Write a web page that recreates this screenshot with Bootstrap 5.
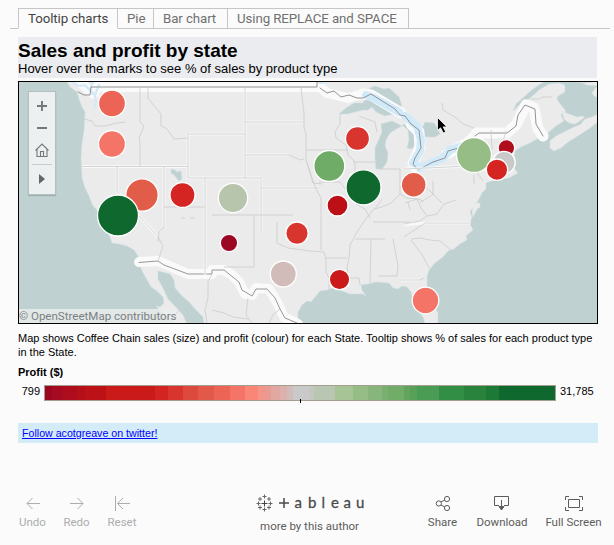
<!DOCTYPE html>
<html lang="en">
<head>
<meta charset="utf-8">
<meta name="viewport" content="width=device-width, initial-scale=1">
<title>Tooltip charts</title>
<link href="https://cdn.jsdelivr.net/npm/bootstrap@5.3.0/dist/css/bootstrap.min.css" rel="stylesheet">
<style>
body{background:#fbfbfb;color:#000;font-family:"Liberation Sans",Arial,sans-serif;width:614px;height:545px;overflow:hidden}
.ui-font{font-family:Roboto,"Open Sans",sans-serif;font-weight:400}
.viz-tabs{padding:8px 4px 0 10px;height:29px}
.viz-tabs .spacer{width:8px;border-bottom:1px solid #c6c6c6}
.viz-tabs .nav-link{border:1px solid #c6c6c6;border-left:0;border-radius:0;padding:0 0 0 9px;height:21px;line-height:19px;font-size:13.3px;letter-spacing:-.1px;color:#707070;white-space:nowrap}
.viz-tabs .nav-link:hover{border-color:#c6c6c6}
.viz-tabs .nav-link.active{border-left:1px solid #c6c6c6;border-bottom-color:#fbfbfb;background:#fbfbfb;color:#444}
.w-a{width:100px}.w-b{width:36px}.w-c{width:74px}.w-d{width:181px}
.w-a,.w-b,.w-c,.w-d{margin:0}
.heading{margin:8px 17px 0 18px;background:#ebecef;height:41px}
.heading h1{font-size:19px;line-height:21px;padding-top:3px;font-weight:700;margin:0}
.heading p{font-size:13px;line-height:15px;margin:0}
.map-box{margin:3px 16px 0 18px;height:243px;border:1px solid #000}
.map-tools{left:9px;top:9px;width:28px;height:104px;background:#edf0f1;border:1px solid #b4bfbf;box-shadow:0 1px 1px #9fb0b0}
.credit{left:0;bottom:0;width:157px;height:14px;line-height:14px;background:rgba(236,238,238,.78);color:#7a8080;font-size:11.55px;white-space:nowrap}
.caption-text{margin:7px 16px 0 18px;font-size:11px;line-height:14px;height:28px;white-space:nowrap}
.legend-title{margin:7px 18px 0;font-size:11px;font-weight:700;line-height:13px}
.legend-row{margin-top:6px;height:17px;font-size:11px;line-height:12px}
.legend-row .low{width:44px;padding-right:4px}
.ramp{width:512px;height:16px;border:1px solid #a39e8f}
.ramp i{left:255px;top:13px;width:1px;height:4px;background:#000}
.follow{margin:21px 16px 0 18px;height:20px;padding-left:4px;background:#d4ebf8;font-size:10.65px;line-height:20px}
.follow a{color:#00f}
.foot{margin-top:50px;height:51px;font-size:11.5px;line-height:15px}
.foot .tool{padding-top:1px}
.foot svg{display:block;margin:0 auto 3px}
.off{color:#adadad}.on{color:#5c5c5c}
.lft{padding-left:18px;width:230px}
.undo{width:29px;margin-right:15px}.redo{width:29px;margin-right:16px}.reset{width:30px}
.mid{width:159px}
.brand{height:26px;padding-left:25px;padding-top:1px}
.rgt{width:225px;padding-left:38px;white-space:nowrap}
.share{width:31px;margin-right:18px}.down{width:52px;margin-right:17px}.full{width:57px}
</style>
<script src="https://cdn.jsdelivr.net/npm/bootstrap@5.3.0/dist/js/bootstrap.bundle.min.js"></script>
</head>
<body>
<nav class="viz-tabs ui-font d-flex">
<span class="spacer"></span>
<a class="nav-link active w-a">Tooltip charts</a><a class="nav-link w-b">Pie</a><a class="nav-link w-c">Bar chart</a><a class="nav-link w-d">Using REPLACE and SPACE</a>
<span class="spacer flex-grow-1"></span>
</nav>
<header class="heading"><h1>Sales and profit by state</h1><p>Hover over the marks to see % of sales by product type</p></header>
<section class="map-box position-relative overflow-hidden">
<svg class="d-block" width="578" height="241" viewBox="19 82 578 241">
<rect x="18" y="81" width="580" height="243" fill="#ebebeb"/>
<g fill="#c0d1d1" stroke="#cddfe4" stroke-width=".5">
<path d="M18 80H66L70 87 77 92 79 99 82 107 85 112 84 130 82 143 81 158 82 178 85 188 89 196 93 206 99 212 104 225 109 234 112 243 119 244 127 246 134 250 138 256 139 263 142 271 146 278 151 287 157 291 163 297 164 303 160 307 156 306 160 311 169 318 176 324H18Z"/>
<path d="M158 271 162 272 170 274 174 280 175 288 181 295 189 302 196 310 203 317 204 324H187L183 315 175 306 168 299 163 288 158 279Z"/>
<path d="M298 324 298 312 302 305 307 301 311 302 316 296 320 291 327 290 333 288 342 291 350 294 356 294 363 294 366 296 362 290 361 285 368 284 376 282 389 283 393 288 398 289 402 286 407 287 411 292 414 301 417 310 423 317 425 324H438L438 313 432 302 428 294 427 285 427 277 429 270 435 263 443 257 448 251 454 249 460 244 467 240 466 236 473 230 470 224 472 217 470 211 475 207 479 199 482 193 486 189 486 183 492 181 500 179 509 178 518 173 514 168 514 160 515 151 521 147 530 143 537 139 543 136 548 133 556 126 564 121 561 115 566 111 561 105 557 99 558 96 565 92 565 85 559 83 549 84 539 90 529 99 522 102 513 111 516 104 524 97 533 89 545 81H598V324Z"/>
<path d="M171 169 175 170 177 172 181 171 182 179 179 181 174 175 171 173Z"/>
<path d="M339 114 346 108 354 103 363 103 366 98 370 88 375 86 384 89 389 88 399 97 402 106 398 107 398 113 385 116 376 112 372 107 368 110 363 110 355 112 347 114Z"/>
<path d="M381 124 392 121 402 126 396 129 390 133 386 140 385 146 388 153 387 162 382 169 376 169 375 158 375 148 379 139 382 132Z"/>
<path d="M402 125 411 123 420 132 425 122 434 123 438 129 440 134 435 137 428 137 420 136 412 149 407 148 409 140 408 130Z"/>
</g>
<g fill="#ebebeb" stroke="#dae2e2" stroke-width=".5">
<path d="M550 141 556 136 564 132 574 127 580 125 585 119 592 117 599 113V121L590 128 581 134 573 139 568 142 561 148 554 151 550 148Z"/>
<path d="M562 111 569 114 577 117 583 116 584 118 575 124 569 123 564 119ZM578 81 584 83 593 82 599 81V86L587 85ZM596 87 599 89V98L594 96 592 93ZM475 203 480 203 480 207 477 209 473 217 472 211Z"/>
</g>
<g fill="none" stroke-linejoin="round" stroke-linecap="round">
<path d="M80 82 91 92 94 94 97 87 320 87 327 93 348 98 363 94" stroke="#fafafa" stroke-width="10"/>
<path d="M139 262 158 261 188 274 212 274 212 270 224 270 232 275 239 282 245 294 252 295 256 288 269 289 278 304 284 317 298 324" stroke="#fafafa" stroke-width="10"/>
<path d="M363 94 371 95 401 113M411 124 419 132 420 148 413 163 416 168M447 154 469 142 477 133 507 133 516 125 526 105 534 108 538 129 543 136" stroke="#fafafa" stroke-width="11"/>
<path d="M366 95 374 98 399 112M405 116 417 126 421 140 420 151 413 163 420 168 443 158 450 150 462 146" stroke="#d1eafa" stroke-width="8"/>
<path d="M71 81 79 86 85 85 93 94M93 81 90 90 95 95 99 85M95 96 96 104 94 107M319 83H324" stroke="#d2eaf7" stroke-width="2.2"/>
<path d="M78 92 84 95 90 95 91 87 317 87V82M320 88 327 93 334 91 341 97 349 95 357 98 363 98 371 94 395 109 400 115 405 116 411 124 419 130 421 148 415 158 413 164 418 170 433 162 445 158 448 151 462 147M475 136 479 133 507 133 516 126 518 115 525 105 530 107 535 109 536 124 543 136" stroke="#929292" stroke-width="1"/>
<path d="M139 262.500 158 261 164 265 188 274H212V270H224L239 282 242 290 252 296 256 289 267 289 275 298 280 309 285 318 297 323" stroke="#989898" stroke-width="1"/>
</g>
<g fill="none" stroke="#fff" stroke-width="3" opacity=".65"><path d="M82 166.500H188M188 134V178H261M261 178V232M245 88V178M117 167V191L158 237M164 167V227M205 178V275M245 122H304M245 155H289M188 134H245M261 188H320M404 225 425 223H471M404 169 448 167 483 165M401 280H420"/></g>
<g fill="none" stroke="#cecece" stroke-width=".85">
<path d="M84 119 92 121 95 126 105 126 117 123 126 122M140 87V122L144 126 139 138 140 143V166M82 166.500H188M188 134H245M188 134V178H205M148 87V98L155 107 161 114 161 126 167 129 174 139 188 138M245 88V178M205 178H261V232M117 167V191L158 237 163 246 158 261M164 167V227L159 232 158 242M205 178V275M205 207H164M212 215H254V267H224M254 215H293M277 222V243L288 248 310 251 324 252 326 260V272L329 278 329 289M245 122H304M245 155H289L300 160 304 159M301 88 304 113 304 128 306 134 306 150 306 160 311 175 316 189 321 198 321 250M306 150H348M261 188H320M319 182H340L347 191M306 160 308 166 313 183 322 184M340 113V124L335 132 336 138 346 145 348 155 355 162 355 171 349 178 347 188M353 162H375M359 116 375 122 377 132M379 169H400V194L391 203 382 207 374 209 365 220 357 232 350 245 349 258 347 267 348 278 359 278 360 285M325 258H347M355 239H385M371 239 370 283M393 239 398 266 397 276H378M373 222H410M400 194 407 198 418 199 423 201M405 203 417 199 421 208 427 216 420 221 404 224M427 216 437 214 444 204 456 200M404 237 425 223H471M411 239 420 238 430 240 440 241 451 250M411 240 423 256 429 268M401 280H420L424 278M404 169 448 167 483 165M433 181 433 194 420 203M478 165V174L483 181M491 130 492 150M506 131 502 145M500 150 509 150M442 103 443 110 455 117 463 124 474 128M474 175V184M531 99 539 99 543 97 552 97M408 202 410 210"/>
<path d="M212 275 208 281V298L205 310 207 323M248 298 246 315 252 323M212 310 224 313 233 317 248 319M269 323 273 315 280 309M181 218H185M190 218H195M166 323 181 309M356 204 365 209 370 218M375 209 382 199M420 181 442 203"/>
</g>
<g stroke="#fff" stroke-width="1.3">
<circle cx="112" cy="103.500" r="13.500" fill="#eb6456"/><circle cx="112" cy="144" r="13.500" fill="#f47568"/>
<circle cx="142" cy="195" r="16.200" fill="#e25c4a"/><circle cx="118" cy="215.500" r="20.500" fill="#0f692f"/>
<circle cx="182.500" cy="195" r="12.500" fill="#d42522"/><circle cx="233" cy="198" r="14.700" fill="#b7c5ad"/>
<circle cx="229" cy="243" r="8.700" fill="#9c0824"/><circle cx="297" cy="233.200" r="11.200" fill="#d7352e"/>
<circle cx="283.300" cy="274" r="13" fill="#d2bcba"/><circle cx="357.500" cy="138.500" r="12" fill="#d7352e"/>
<circle cx="329.300" cy="166" r="15.500" fill="#6fac67"/><circle cx="363.500" cy="187.300" r="17.500" fill="#0f692f"/>
<circle cx="337.500" cy="205.500" r="10.500" fill="#bc1016"/><circle cx="339.500" cy="279.500" r="10.200" fill="#ca1a19"/>
<circle cx="413.700" cy="184.700" r="12.400" fill="#e25c4a"/><circle cx="474" cy="155" r="17.500" fill="#95bd85"/>
<circle cx="506.400" cy="148" r="8.300" fill="#b00e1c"/><circle cx="504" cy="162.500" r="11.200" fill="#c9c9c9"/>
<circle cx="497" cy="169.700" r="10.700" fill="#d42522"/><circle cx="425.500" cy="300.500" r="13.300" fill="#f47568"/>
</g>
<path d="M437.500 117.500V130.500L440.500 127.800 443.300 133 445.700 131.800 443.200 126.900H447Z" fill="#000" stroke="#fff" stroke-width=".8"/>
</svg>
<div class="map-tools position-absolute">
<svg class="d-block" width="26" height="102" viewBox="29 92 26 102" fill="none" stroke="#777">
<path d="M37 106H47M42 101V111M37 128H47" stroke-width="1.900"/>
<path d="M35.500 150.500 42 144 48.500 150.500M37 149V156.500H47V149M40.500 156V151.500H43.500V156" stroke-width="1.100"/>
<path d="M32 164.500H52" stroke="#c7cdcd"/><path d="M39 174V184L45 179Z" fill="#666" stroke="none"/>
</svg></div>
<div class="credit ui-font position-absolute">© OpenStreetMap contributors</div>
</section>
<p class="caption-text mb-0">Map shows Coffee Chain sales (size) and profit (colour) for each State. Tooltip shows % of sales for each product type<br>in the State.</p>
<div class="legend-title">Profit ($)</div>
<div class="legend-row d-flex">
<span class="low text-end">799</span>
<div class="ramp position-relative"><svg class="d-block" width="510" height="14" viewBox="45 0 510 14" shape-rendering="crispEdges">
<path fill="#9c0824" d="M45 0h510v14H45z"/><path fill="#a60b22" d="M52 0h503v14H52z"/><path fill="#ae0d1e" d="M63 0h492v14H63z"/><path fill="#b50f1a" d="M77 0h478v14H77z"/><path fill="#bc1217" d="M85 0h470v14H85z"/><path fill="#ca1a19" d="M106 0h449v14H106z"/><path fill="#d22523" d="M155 0h400v14H155z"/><path fill="#d7352e" d="M168 0h387v14H168z"/><path fill="#dc493d" d="M183 0h372v14H183z"/><path fill="#e25949" d="M198 0h357v14H198z"/><path fill="#eb6456" d="M214 0h341v14H214z"/><path fill="#f47568" d="M230 0h325v14H230z"/><path fill="#fa8678" d="M245 0h310v14H245z"/><path fill="#f39589" d="M258 0h297v14H258z"/><path fill="#e99b93" d="M265 0h290v14H265z"/><path fill="#e3a7a1" d="M271 0h284v14H271z"/><path fill="#dab1ac" d="M280 0h275v14H280z"/><path fill="#d2bcba" d="M287 0h268v14H287z"/><path fill="#c9c9c9" d="M293 0h262v14H293z"/><path fill="#c2c8c0" d="M310 0h245v14H310z"/><path fill="#b9c6b1" d="M314 0h241v14H314z"/><path fill="#a6c496" d="M335 0h220v14H335z"/><path fill="#95bd85" d="M353 0h202v14H353z"/><path fill="#87b57b" d="M368 0h187v14H368z"/><path fill="#79af71" d="M382 0h173v14H382z"/><path fill="#71ad68" d="M388 0h167v14H388z"/><path fill="#61a45d" d="M404 0h151v14H404z"/><path fill="#58a056" d="M410 0h145v14H410z"/><path fill="#4a9b54" d="M417 0h138v14H417z"/><path fill="#338e45" d="M439 0h116v14H439z"/><path fill="#29833d" d="M464 0h91v14H464z"/><path fill="#1d7936" d="M486 0h69v14H486z"/><path fill="#0f692f" d="M499 0h56v14H499z"/>
</svg><i class="position-absolute"></i></div><span class="ps-1">31,785</span>
</div>
<div class="follow"><a href="#">Follow acotgreave on twitter!</a></div>
<footer class="foot ui-font d-flex text-center">
<div class="lft d-flex off">
<div class="tool undo"><svg width="16" height="18" fill="none" stroke="currentColor"><path d="M15 9.500H2M7.500 4 2 9.500 7.500 15"/></svg>Undo</div>
<div class="tool redo"><svg width="16" height="18" fill="none" stroke="currentColor"><path d="M1 9.500H14M8.500 4 14 9.500 8.500 15"/></svg>Redo</div>
<div class="tool reset"><svg width="16" height="18" fill="none" stroke="currentColor"><path d="M1.500 2V17M16 9.500H3.500M9 4 3.500 9.500 9 15"/></svg>Reset</div>
</div>
<div class="mid on"><div class="brand d-flex">
<svg class="m-0" width="112" height="18" viewBox="0 0 112 18" fill="none" stroke="#666" stroke-width="1">
<path d="M6.500 9.500H12.500M9.500 6.500V12.500" stroke="#444"/><path d="M7.500 2.500H11.500M9.500 .5V4.500M7.500 15.500H11.500M9.500 13.500V17.500M1.500 9.500H5.500M3.500 7.500V11.500M13.500 9.500H17.500M15.500 7.500V11.500M3 5H7M5 3V7M12 5H16M14 3V7M3 13.500H7M5 11.500V15.500M12 13.500H16M14 11.500V15.500"/>
<path d="M24 9H34M29 4V14" stroke-width="1.500" stroke="#4a4a4a"/>
<g fill="#4a4a4a" stroke="#4a4a4a" stroke-width=".3" font-family="Lato,sans-serif" font-size="15"><text x="39.500" y="14">a</text><text x="53" y="14">b</text><text x="66.500" y="14">l</text><text x="76" y="14">e</text><text x="88.500" y="14">a</text><text x="101" y="14">u</text></g>
</svg></div>more by this author</div>
<div class="rgt d-flex on">
<div class="tool share"><svg width="16" height="18" fill="none" stroke="currentColor"><circle cx="3.800" cy="9.500" r="2.600"/><circle cx="12" cy="5" r="2.600"/><circle cx="12" cy="14" r="2.600"/><path d="M6 8 9.800 6M6 11 9.800 13"/></svg>Share</div>
<div class="tool down"><svg width="16" height="18" fill="none" stroke="currentColor"><path d="M5 11.500H.5V2.500H14.500V11.500H10M7.500 6V14"/><path d="M5 12.500H10L7.500 16Z" fill="currentColor"/></svg>Download</div>
<div class="tool full"><svg width="18" height="18" fill="none" stroke="currentColor"><path d="M3.500 5.500H14.500V13.500H3.500ZM.5 6V2.500H4M14 2.500H17.500V6M17.500 13V16.500H14M4 16.500H.5V13"/></svg>Full Screen</div>
</div>
</footer>
</body>
</html>
